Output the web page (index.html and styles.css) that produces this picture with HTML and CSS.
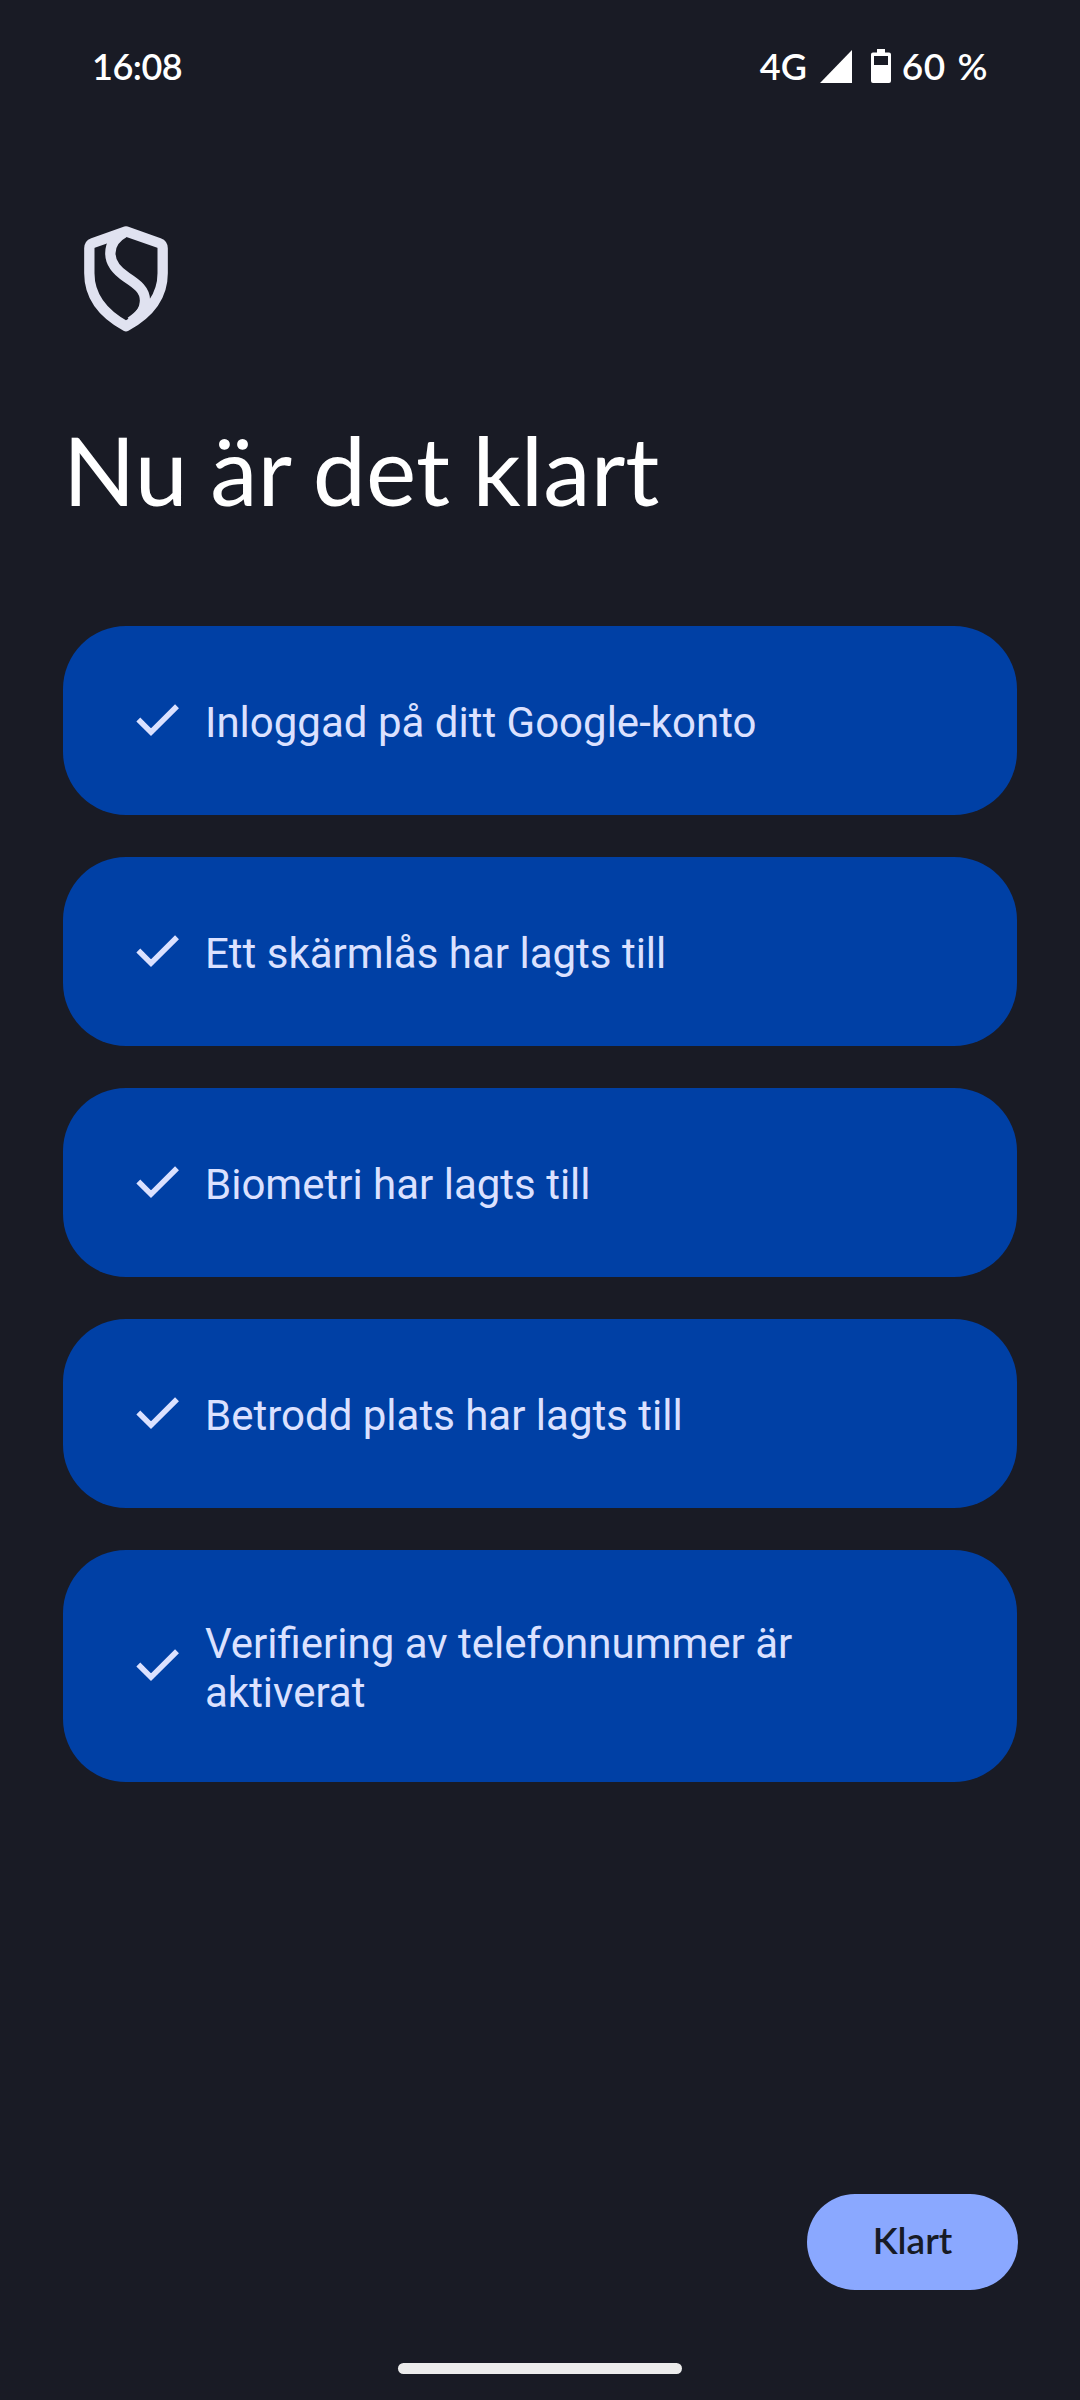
FILE: index.html
```html
<!DOCTYPE html>
<html lang="sv">
<head>
    <meta charset="UTF-8">
    <meta name="viewport" content="width=device-width, initial-scale=1.0">
    <title>Nu är det klart</title>
    <link rel="stylesheet" href="styles.css">
</head>
<body>
    <div class="screen">
        <header class="status-bar">
            <span class="clock">16:08</span>
            <div class="status-icons">
                <span class="network">4G</span>
                <svg class="signal" viewBox="0 0 32 33"><path d="M32 0v33H0z"/></svg>
                <svg class="battery" viewBox="0 0 20 34"><path fill-rule="evenodd" d="M6 0h8v3.500h4a2 2 0 0 1 2 2V32a2 2 0 0 1-2 2H2a2 2 0 0 1-2-2V5.500a2 2 0 0 1 2-2h4zM3 7v9h14V7z"/></svg>
                <span class="percent">60 %</span>
            </div>
        </header>

        <main class="content">
            <svg class="shield" viewBox="72 48 252 318">
                <path d="M198 64 L297 99 Q308 103 308 115 V190 C308 266 262 314 198 349 C134 314 88 266 88 190 V115 Q88 103 99 99 Z"/>
                <path d="M192 68 C162 84 151 108 151 130 C151 160 168 181 200 202 C232 223 255 240 255 272 C255 296 245 312 226 328"/>
                <path d="M256 275 C256 300 240 316 212 336"/>
            </svg>

            <h1 class="title">Nu är det klart</h1>

            <ul class="steps">
                <li class="step">
                    <svg class="check" viewBox="0 0 58 58"><path d="M10.300 27.500 23 40.200 49 14.200"/></svg>
                    <span class="step-text">Inloggad på ditt Google-konto</span>
                </li>
                <li class="step">
                    <svg class="check" viewBox="0 0 58 58"><path d="M10.300 27.500 23 40.200 49 14.200"/></svg>
                    <span class="step-text">Ett skärmlås har lagts till</span>
                </li>
                <li class="step">
                    <svg class="check" viewBox="0 0 58 58"><path d="M10.300 27.500 23 40.200 49 14.200"/></svg>
                    <span class="step-text">Biometri har lagts till</span>
                </li>
                <li class="step">
                    <svg class="check" viewBox="0 0 58 58"><path d="M10.300 27.500 23 40.200 49 14.200"/></svg>
                    <span class="step-text">Betrodd plats har lagts till</span>
                </li>
                <li class="step">
                    <svg class="check" viewBox="0 0 58 58"><path d="M10.300 27.500 23 40.200 49 14.200"/></svg>
                    <span class="step-text">Verifiering av telefonnummer är aktiverat</span>
                </li>
            </ul>
        </main>

        <footer class="actions">
            <button class="done-btn">Klart</button>
        </footer>
        <div class="home-bar"></div>
    </div>
</body>
</html>
```

FILE: styles.css
```css
:root {
    --bg: #191b25;
    --card: #0040a5;
    --card-text: #dbe1ff;
    --shield: #e0e2f0;
    --button: #8aa8ff;
}

* {
    box-sizing: border-box;
}

body {
    margin: 0;
    background-color: var(--bg);
    color: white;
    font-family: Roboto, sans-serif;
}

.screen {
    width: 1080px;
    height: 2400px;
    display: flex;
    flex-direction: column;
}

.status-bar {
    height: 132px;
    padding: 0 92px;
    display: flex;
    align-items: center;
    justify-content: space-between;
    font-family: Lato, sans-serif;
    font-size: 36px;
    font-weight: 600;
    line-height: 44px;
}

.clock {
    letter-spacing: -0.5px;
}

.status-icons {
    display: flex;
    align-items: center;
}

.signal {
    width: 32px;
    height: 33px;
    margin-left: 13px;
    fill: white;
}

.battery {
    width: 20px;
    height: 34px;
    margin: 0 11px 0 19px;
    fill: white;
}

.percent {
    font-size: 37px;
    word-spacing: 2px;
    letter-spacing: 0.5px;
}

.content {
    flex: 1;
    padding: 94px 63px 0;
}

.shield {
    display: block;
    width: 84px;
    height: 106px;
    margin-left: 21px;
    fill: none;
    stroke: var(--shield);
    stroke-width: 31;
    stroke-linejoin: round;
}

.title {
    margin: 79px 0 0;
    height: 215px;
    font-family: Lato, sans-serif;
    font-size: 95px;
    font-weight: 400;
    line-height: 116px;
    letter-spacing: 0.1px;
    word-spacing: -2px;
    white-space: nowrap;
}

.steps {
    list-style-type: none;
    margin: 0;
    padding: 0;
    display: flex;
    flex-direction: column;
    gap: 42px;
}

.step {
    min-height: 189px;
    padding: 65px 80px 65px 65px;
    border-radius: 63px;
    background-color: var(--card);
    color: var(--card-text);
    display: flex;
    align-items: center;
    gap: 19px;
}

.check {
    flex: none;
    width: 58px;
    height: 58px;
    fill: none;
    stroke: var(--card-text);
    stroke-width: 5.5;
}

.step-text {
    padding-top: 4px;
    font-size: 42px;
    line-height: 49px;
}

.actions {
    display: flex;
    justify-content: flex-end;
    padding-right: 62px;
}

.done-btn {
    width: 211px;
    height: 96px;
    padding: 0 0 5px;
    border: none;
    border-radius: 48px;
    background-color: var(--button);
    color: #171b26;
    font-family: Lato, sans-serif;
    font-size: 37px;
    font-weight: 600;
}

.home-bar {
    width: 284px;
    height: 11px;
    margin: 73px auto 26px;
    border-radius: 6px;
    background-color: #ececec;
}
```
